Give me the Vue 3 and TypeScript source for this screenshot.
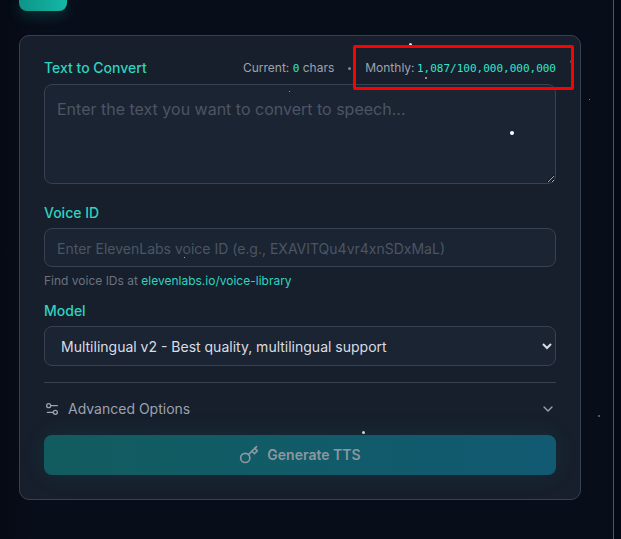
<script setup lang="ts">
import { ref } from 'vue';

interface Star {
  x: number;
  y: number;
  size: number;
  alpha: number;
}

const text = ref('');
const voiceId = ref('');
const model = ref('multilingual_v2');

const stars: Star[] = [
  { x: 409, y: 43, size: 3, alpha: 0.9 },
  { x: 289, y: 91, size: 1, alpha: 0.7 },
  { x: 425, y: 77, size: 2, alpha: 0.7 },
  { x: 510, y: 131, size: 4, alpha: 1 },
  { x: 589, y: 99, size: 1, alpha: 0.6 },
  { x: 184, y: 257, size: 1, alpha: 0.8 },
  { x: 362, y: 431, size: 3, alpha: 0.8 },
  { x: 598, y: 415, size: 2, alpha: 0.4 },
  { x: 110, y: 73, size: 1, alpha: 0.7 },
  { x: 570, y: 60, size: 3, alpha: 0.3 },
];

function starStyle(s: Star) {
  return {
    left: `${s.x}px`,
    top: `${s.y}px`,
    width: `${s.size}px`,
    height: `${s.size}px`,
    opacity: s.alpha,
  };
}
</script>

<template>
  <div class="page">
    <main class="main">
      <div class="top-btn"></div>

      <section class="card">
        <div class="field-head">
          <label class="label">Text to Convert</label>
          <div class="usage">
            <span>Current: <code class="num">0</code> chars</span>
            <i class="sep"></i>
            <span>Monthly: <code class="num num-total">1,087/100,000,000,000</code></span>
          </div>
        </div>
        <textarea
          v-model="text"
          class="control area"
          placeholder="Enter the text you want to convert to speech..."
        ></textarea>

        <label class="label voice-label">Voice ID</label>
        <input
          v-model="voiceId"
          class="control input"
          type="text"
          placeholder="Enter ElevenLabs voice ID (e.g., EXAVITQu4vr4xnSDxMaL)"
        />
        <p class="help">
          Find voice IDs at <a class="link">elevenlabs.io/voice-library</a>
        </p>

        <label class="label model-label">Model</label>
        <select v-model="model" class="control select">
          <option value="multilingual_v2">Multilingual v2 - Best quality, multilingual support</option>
          <option value="turbo_v2">Turbo v2 - Fast, low latency</option>
        </select>

        <div class="advanced">
          <div class="advanced-left">
            <svg class="icon-sm" viewBox="0 0 24 24" fill="none" stroke="currentColor" stroke-width="2" stroke-linecap="round" stroke-linejoin="round">
              <path d="M20 7h-9" />
              <path d="M14 17H5" />
              <circle cx="17" cy="17" r="3" />
              <circle cx="7" cy="7" r="3" />
            </svg>
            <span class="advanced-text">Advanced Options</span>
          </div>
          <svg class="icon-chev" viewBox="0 0 24 24" fill="none" stroke="currentColor" stroke-width="2" stroke-linecap="round" stroke-linejoin="round">
            <path d="m6 9 6 6 6-6" />
          </svg>
        </div>

        <button class="generate" type="button" disabled>
          <svg class="icon-key" viewBox="0 0 24 24" fill="none" stroke="currentColor" stroke-width="2" stroke-linecap="round" stroke-linejoin="round">
            <path d="m21 2-9.6 9.6" />
            <path d="m15.5 7.5 3 3L22 7l-3-3" />
            <circle cx="7.5" cy="15.5" r="5.5" />
          </svg>
          <span class="generate-text">Generate TTS</span>
        </button>
      </section>
    </main>
    <aside class="rail"></aside>

    <i v-for="(s, i) in stars" :key="i" class="star" :style="starStyle(s)"></i>
    <div class="highlight"></div>
  </div>
</template>

<style>
html,
body {
  margin: 0;
  background: #080d1a;
}
</style>

<style scoped>
.page {
  position: relative;
  display: flex;
  width: 621px;
  height: 539px;
  overflow: hidden;
  background: linear-gradient(90deg, #050a14 0, #080d1a 40px);
  font-family: Inter, "Liberation Sans", sans-serif;
}

.main {
  box-sizing: border-box;
  width: 613px;
  padding: 0 32px 0 19px;
  flex-shrink: 0;
}

.rail {
  flex: 1;
  border-left: 1px solid #1c6d70;
  background: #050913;
}

.top-btn {
  width: 48px;
  height: 11px;
  border-radius: 0 0 8px 8px;
  background: linear-gradient(90deg, #0d9488, #14b8a6);
  box-shadow: 0 4px 14px rgba(20, 184, 166, 0.25);
}

.card {
  box-sizing: border-box;
  display: flex;
  flex-direction: column;
  height: 465px;
  margin-top: 24px;
  padding: 22px 24px 24px;
  border: 1px solid #374151;
  border-radius: 10px;
  background: #171e2c;
}

.field-head {
  display: flex;
  align-items: center;
  justify-content: space-between;
  margin-bottom: 6px;
}

.label {
  display: block;
  color: #2dd4bf;
  font-size: 14px;
  font-weight: 500;
  line-height: 20px;
}

.voice-label {
  margin-top: 19px;
  margin-bottom: 5px;
}

.model-label {
  margin-top: 12px;
  margin-bottom: 5px;
}

.usage {
  display: flex;
  align-items: center;
  color: #9ca3af;
  font-size: 12px;
  line-height: 16px;
}

.sep {
  width: 3px;
  height: 3px;
  margin: 0 14px;
  border-radius: 50%;
  background: #7b8494;
}

.num {
  color: #33e6cc;
  font-family: "DejaVu Sans Mono", "Liberation Mono", monospace;
  font-size: 11px;
}

.num-total {
  margin-left: -1px;
}

.control {
  box-sizing: border-box;
  display: block;
  width: 100%;
  margin: 0;
  border: 1px solid #374151;
  border-radius: 8px;
  outline: none;
  background: #1b2433;
  color: #e5e7eb;
  font-family: inherit;
}

.control::placeholder {
  color: #4b5563;
}

.area {
  height: 100px;
  padding: 12px;
  font-size: 16px;
  line-height: 24px;
  color-scheme: dark;
  resize: vertical;
}

.input {
  height: 40px;
  padding: 2px 12px 0;
  font-size: 14px;
}

.help {
  margin: 6px 0 0;
  color: #6b7280;
  font-size: 12px;
  line-height: 16px;
}

.link {
  color: #2dd4bf;
}

.select {
  height: 40px;
  padding: 0 8px 0 12px;
  color: #d9dde3;
  font-size: 14px;
  color-scheme: dark;
}

.advanced {
  display: flex;
  align-items: center;
  justify-content: space-between;
  height: 20px;
  margin-top: 16px;
  padding: 16px 0;
  border-top: 1px solid #374151;
  box-sizing: content-box;
  color: #9ca3af;
  font-size: 14px;
}

.advanced-left {
  display: flex;
  align-items: center;
  gap: 8px;
}

.advanced-text {
  padding-bottom: 2px;
}

.icon-sm {
  width: 16px;
  height: 16px;
}

.icon-chev {
  width: 16px;
  height: 16px;
}

.generate {
  display: flex;
  align-items: center;
  justify-content: center;
  gap: 8px;
  width: 100%;
  height: 40px;
  padding: 0;
  border: none;
  border-radius: 8px;
  background: linear-gradient(90deg, #125c5f, #115a72);
  box-shadow: 0 0 24px rgba(20, 184, 166, 0.12);
  color: #8c979f;
  font-family: inherit;
  font-size: 14px;
  font-weight: 600;
}

.generate-text {
  padding-bottom: 2px;
}

.icon-key {
  width: 20px;
  height: 20px;
}

.star {
  position: absolute;
  border-radius: 50%;
  background: #fff;
}

.highlight {
  position: absolute;
  left: 353px;
  top: 45px;
  box-sizing: border-box;
  width: 221px;
  height: 45px;
  border: 3px solid #ff0000;
  border-radius: 2px;
}
</style>
